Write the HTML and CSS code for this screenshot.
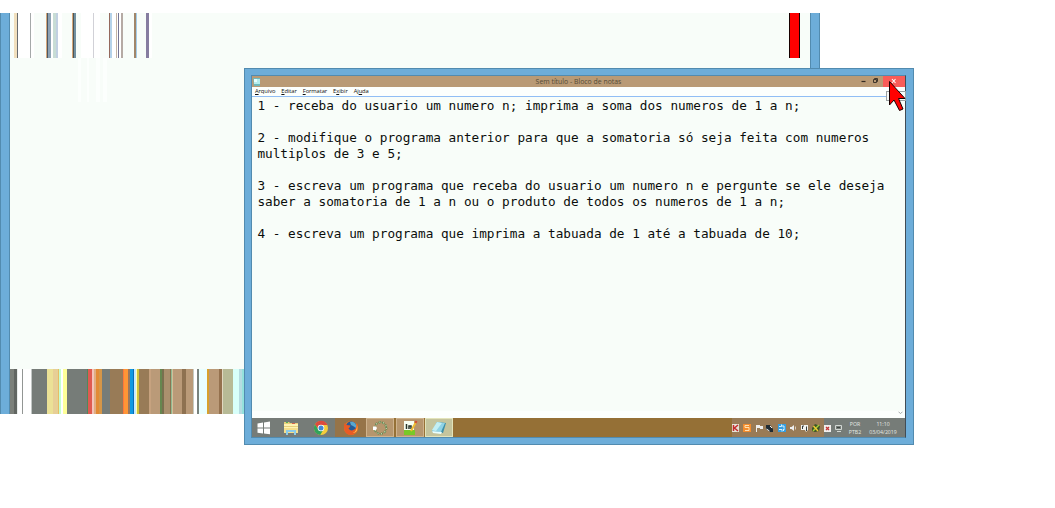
FILE: index.html
```
<!DOCTYPE html>
<html lang="pt-BR">
<head>
<meta charset="utf-8">
<title>Sem título - Bloco de notas</title>
<link rel="stylesheet" href="styles.css">
</head>
<body>
<div class="desktop">
  <section class="back-window">
    <div class="stripes-top"></div>
    <div class="ghosts"></div>
    <div class="red-bar"></div>
    <div class="stripes-bottom"></div>
  </section>

  <main class="window">
    <header class="titlebar">
      <svg class="app-icon" width="8" height="8" viewBox="0 0 8 8"><path fill="#6fb9bd" d="M0 0h7v8H1z"/><path fill="#b5eeee" d="M1 1h6v5H1z"/><path fill="#e6ffff" d="M1 1h3v3H1z"/></svg>
      <h1 class="title">Sem título - Bloco de notas</h1>
      <div class="controls">
        <svg width="15" height="11" viewBox="0 0 15 11"><path stroke="#332b22" stroke-width="1.200" d="M5.500 5.500h4"/></svg>
        <svg width="12" height="11" viewBox="0 0 12 11"><path fill="none" stroke="#40372c" d="M2.500 3.500h3v3h-3zM3.500 3.500v-1h3v3h-1"/></svg>
        <span class="close"><svg width="22" height="11" viewBox="0 0 22 11"><path stroke="#fff" stroke-width="1.100" d="M9 3l3.500 4M12.500 3L9 7"/></svg></span>
      </div>
    </header>
    <nav class="menu"><span><u>A</u>rquivo</span><span><u>E</u>ditar</span><span><u>F</u>ormatar</span><span>E<u>x</u>ibir</span><span>Aj<u>u</u>da</span></nav>
    <pre class="editor">1 - receba do usuario um numero n; imprima a soma dos numeros de 1 a n;

2 - modifique o programa anterior para que a somatoria só seja feita com numeros
multiplos de 3 e 5;

3 - escreva um programa que receba do usuario um numero n e pergunte se ele deseja
saber a somatoria de 1 a n ou o produto de todos os numeros de 1 a n;

4 - escreva um programa que imprima a tabuada de 1 até a tabuada de 10;</pre>
    <div class="scroll-corner"><svg width="5" height="4" viewBox="0 0 5 4"><path fill="none" stroke="#a3aaaa" d="M.5 .7l2 2 2-2"/></svg></div>
    <footer class="taskbar">
      <div class="apps">
        <span class="app start"><svg width="16" height="16" viewBox="0 0 16 16"><path fill="#fff" d="M1.500 3.400l5.500-.8v5H1.500zM8 2.400l6-.9v6.100H8zM1.500 8.400H7v5l-5.500-.7zM8 8.400h6v5.900l-6-.8z"/></svg></span>
        <span class="app folder"><svg width="16" height="16" viewBox="0 0 16 16"><path fill="#e9cf7b" d="M1 2h5l1 1h8v10H1z"/><path fill="#fff3b3" d="M1 4h14v9H1z"/><path fill="#52b259" d="M3 2h2v1H3z"/><path fill="#d6604e" d="M9 3h3v1H9z"/><path fill="#e7cf7b" d="M1 6h14v1H1z"/><path fill="#f6df8b" d="M1 8h14v5H1z"/><path fill="none" stroke="#8bcbe9" stroke-width="2" d="M4 15v-4h8v4"/></svg></span>
        <span class="app"><svg width="16" height="16" viewBox="0 0 16 16"><circle cx="8" cy="8" r="7" fill="#f5cd3b"/><path fill="#dc4b3e" d="M2 4.400A7 7 0 0 1 14.500 5H8a3 3 0 0 0-3 4z"/><path fill="#31a35b" d="M2 4.400A7 7 0 0 0 7.200 15l3-5A3 3 0 0 1 5 9z"/><circle cx="8" cy="8" r="3.300" fill="#fff"/><circle cx="8" cy="8" r="2.500" fill="#4289d3"/></svg></span>
        <span class="app brown"><svg width="16" height="16" viewBox="0 0 16 16"><circle cx="8" cy="8" r="7" fill="#ed7821"/><circle cx="8.300" cy="6.600" r="5.300" fill="#245b98"/><path fill="#58a8d1" d="M7 2c4-1 7 2 6 6l-3-2-2-1z"/><path fill="#e95b24" d="M1.500 3l2 2 4 .5-1 2-1 1c2 3 5 2 7 0l2-5c2 6-2 11-6.500 11.500C2 15 0 9 1.500 3z"/><path fill="#ffc34b" d="M13.500 4c1 5-1 8-4 9 5 0 6-5 4-9z"/></svg></span>
        <span class="app open"><svg width="16" height="16" viewBox="0 0 16 16"><circle cx="8.500" cy="8" r="5.800" fill="none" stroke="#658550" stroke-width="2.200" stroke-linecap="round" stroke-dasharray="0.800 2.840"/><circle cx="8.500" cy="8" r="5.800" fill="none" stroke="#c3d6ae" stroke-width="1.400" stroke-dasharray="1 2.640"/><path fill="#fff" d="M1 6.500h3l1 1.500-1 2H1z"/></svg></span>
        <span class="app open"><svg width="16" height="16" viewBox="0 0 16 16"><path fill="#f7fff1" d="M2 1h10v13H2z"/><path fill="#78c927" d="M2 10h11v5H2z"/><path fill="none" stroke="#28352b" stroke-width="1.500" d="M4.500 4v5M7 9V6h2v3"/><path stroke="#eebc31" stroke-width="2" d="M9 11l5-9"/><path stroke="#d14b32" stroke-width="2" d="M13.500 3l1-2"/></svg></span>
        <span class="app active"><svg width="16" height="16" viewBox="0 0 16 16"><path fill="#3d8fa8" d="M6 2l9 1-3 10-11-1z"/><path fill="#8fd3e6" d="M6 2l8 1-4 9-9-1z"/><path fill="#c3eff3" d="M6 2l5 1-6 8-4-1z"/><path fill="#e9ffff" d="M1 11l10 1-1 2-8-1z"/></svg></span>
      </div>
      <div class="tray">
        <svg width="112" height="10" viewBox="0 0 112 10">
          <path fill="#e5e2d8" d="M1 1h7v8H1z"/><path fill="none" stroke="#c52c2d" stroke-width="1.500" d="M2.500 2v6M7 2L3.500 5 7 8"/>
          <path fill="#f38c2e" d="M12 1h8v8h-8z"/><path fill="none" stroke="#ffe1b2" d="M18 2.500h-4v2h4v3h-4"/>
          <path fill="#eee" d="M25 2h4v1h3v3h-3V5h-3v4h-1z"/>
          <path fill="#202b33" d="M35 2h4l3 4v3h-3l-4-3z"/><path stroke="#eee" d="M35.500 6l3 2M39 3l2 2"/>
          <path fill="#359ee1" d="M47 1h8v8h-8z"/><path stroke="#d8f1ff" fill="none" d="M48 3.500h2.500v-2M52 2v2h2M48 6.500h3v2M52.500 8V6H54"/>
          <path fill="#eee" d="M59 4h1.500L63 2v6l-2.500-2H59z"/><path stroke="#d5c9ba" d="M64.500 3.500v3"/>
          <path fill="#f2f2ed" d="M70 2h7v5l-2 2-1-2h-4z"/><path fill="none" stroke="#343b3d" d="M71.500 6V3h1.500M75.500 8V3.500"/>
          <path fill="#3c5726" d="M81 5l3-4 5 2-1 5-4 1-3-1z"/><path stroke="#a8cd38" stroke-width="1.500" d="M82 8l6-6"/><path stroke="#f5cb31" stroke-width="1.500" d="M82.500 3l4.500 5"/>
          <path fill="#f1efed" d="M93 2h7v7h-7z"/><path stroke="#c33435" stroke-width="1.300" d="M95 4l3 3M98 4l-3 3"/>
          <path fill="none" stroke="#d3d8d4" d="M104.500 2.500h6v4h-6zM106 8.500h4"/><path stroke="#3f4643" d="M106 4.500h3"/>
        </svg>
        <div class="lang"><span>POR</span><span>PTB2</span></div>
        <div class="clock"><span>11:10</span><span>03/04/2019</span></div>
      </div>
    </footer>
  </main>
  <div class="tooltip"></div>
  <svg class="cursor" width="19" height="32" viewBox="0 0 19 32"><path fill="#f00" stroke="#180000" d="M1.500 1.500V25l4.500-5 5.500 10.500 3.500-1.500-4.500-10.500H17z"/></svg>
</div>
</body>
</html>
```
FILE: styles.css
```
body { margin: 0; background: #fff; }
.desktop { position: relative; width: 1055px; height: 508px; overflow: hidden; font-family: "Open Sans", "Noto Sans", sans-serif; }
.back-window { position: absolute; left: 0; top: 13px; width: 820px; height: 401px; box-sizing: border-box; background: linear-gradient(90deg, #528baf 0 1px, #6dadd9 1px 9px, #528baf 9px 10px, #f8fdf9 10px 810px, #528baf 810px 811px, #6dadd9 811px 819px, #528baf 819px); }
.stripes-top { position: absolute; left: 10px; top: 0; width: 142px; height: 45px; background: linear-gradient(90deg,
  #f8fdf9 0 4px, #f1dfbd 4px 7px, #666b70 7px 8px, #fff 8px 20px, #a5a9a9 20px 21px, #fff 21px 24px, #f8fdf9 24px 36px,
  #d5a77b 36px 37px, #4d5862 37px 38px, #8da2b4 38px 41px, #fff 41px 43px, #c8ddd5 43px 46px, #c1d0e1 46px 48px, #fff 48px 52px, #f8fdf9 52px 62px,
  #d6a779 62px 63px, #4f5554 63px 64px, #7190a1 64px 66px, #f8fdf9 66px 71px, #fff 71px 83px, #d1d1d7 83px 84px, #fff 84px 90px,
  #f8fdf9 90px 99px, #94695c 99px 100px, #b5d3ea 100px 102px, #fff 102px 106px, #c3b4a4 106px 107px, #fff 107px 108px, #757493 108px 109px, #fff 109px 111px, #b5aaa4 111px 113px,
  #f8fdf9 113px 124px, #a18669 124px 126px, #a4cce8 126px 127px, #f8fdf9 127px 136px, #867da0 136px 139px, #fff 139px 142px); }
.ghosts { position: absolute; left: 78px; top: 45px; width: 30px; height: 44px; background: linear-gradient(90deg, #fcfffd 0 3px, transparent 3px 9px, #fcfffd 9px 11px, transparent 11px 18px, #fcfffd 18px 22px, transparent 22px 25px, #fcfffd 25px 29px, transparent 29px); }
.red-bar { position: absolute; left: 789px; top: 0; width: 11px; height: 45px; box-sizing: border-box; border: solid #180000; border-width: 0 1px; background: #f00; }
.stripes-bottom { position: absolute; left: 10px; bottom: 0; width: 234px; height: 45px; background: linear-gradient(90deg,
  #7c807a 0 4px, #626662 4px 7px, #e9edeb 7px 8px, #fff 8px 12px, #929694 12px 13px, #fff 13px 21px, #c2c7c5 21px 22px, #767c78 22px 37px,
  #ebe196 37px 43px, #e7cf96 43px 48px, #e5bf65 48px 49px, #c5ffd0 49px 51px, #fff 51px 53px, #ffff98 53px 57px, #767c78 57px 77px,
  #50885b 77px 78px, #df5a51 78px 82px, #f4c3b8 82px 84px, #dfad82 84px 86px, #e28a35 86px 89px, #d59648 89px 92px, #767c78 92px 100px,
  #987b57 100px 113px, #ff783b 113px 114px, #ff9636 114px 118px, #99785f 118px 120px, #0f9ae2 120px 123px, #086bb7 123px 124px, #c7e9ff 124px 126px, #ffffb4 126px 127px, #d3c43a 127px 129px,
  #987b57 129px 139px, #c6a27f 139px 141px, #ba9a78 141px 150px, #66874f 150px 152px, #79704f 152px 154px, #ab906e 154px 160px, #8a7552 160px 161px, #90b991 161px 162px, #d1c09a 162px 163px,
  #ba9a78 163px 172px, #8e7150 172px 176px, #ba9a78 176px 183px, #c6cbc1 183px 184px, #fff 184px 187px, #78827d 187px 189px, #e9ffff 189px 197px, #d9a12d 197px 199px, #ba9a78 199px 209px, #94714e 209px 212px, #e1d7c0 212px 213px, #b7ba96 213px 223px, #d8fffa 223px 229px, #b6dce1 229px 232px, #94e1dc 232px); }

.window { position: absolute; left: 244px; top: 68px; width: 670px; height: 377px; box-sizing: border-box; display: flex; flex-direction: column; border: 1px solid #528baf; padding: 6px 7px 7px; background: #6dadd9; }
.window::before { content: ""; position: absolute; left: 6px; top: 6px; width: 655px; height: 363px; box-sizing: border-box; border: 1px solid #528baf; border-right-color: #414c55; pointer-events: none; }
.titlebar { display: flex; align-items: center; flex: none; height: 12px; margin-right: 1px; background: #b99a75; }
.app-icon { margin: 2px 0 0 1px; }
.title { flex: 1; margin: 2px 0 0 40px; text-align: center; font-size: 6.9px; line-height: 10px; font-weight: 400; color: #544b35; }
.controls { display: flex; height: 11px; }
.close { background: #f95c58; }
.controls svg { display: block; }
.menu { display: flex; flex: none; gap: 6px; height: 9px; margin-right: 1px; padding-left: 3px; background: #fcfffd; border-bottom: 1px solid #91bef5; font-size: 5.8px; letter-spacing: -.09px; line-height: 9px; color: #111; }
.menu u { text-decoration-thickness: .5px; text-underline-offset: 1px; }
.editor { flex: 1; min-height: 0; margin: 0 1px 0 0; padding: 1px 0 0 5.400px; background: #f8fdf9; color: #0b0d0b; font: 12.71px/16px "DejaVu Sans Mono", monospace; }
.scroll-corner { display: flex; flex: none; justify-content: flex-end; height: 7px; margin-right: 1px; padding: 0 2px 2px 0; box-sizing: border-box; background: #fcfffd; }
.taskbar { display: flex; flex: none; justify-content: space-between; height: 19px; margin-right: 1px; background: linear-gradient(90deg, #767c78 0 83px, #957036 83px 480px, #997b57 480px 572px, #767c78 572px); }
.apps, .tray { display: flex; align-items: center; }
.app { display: flex; align-items: center; justify-content: center; width: 29px; height: 19px; box-sizing: border-box; }
.start { width: 24px; }
.folder { width: 30px; }
.brown { width: 31px; background: #967448; }
.open { width: 28px; margin-right: 1.5px; background: #b6966e; border: 1px solid #cfb38d; }
.active { width: 28px; background: #c4c49d; border: 1px solid #e2e3ba; }
.tray { color: #e5e9e5; font-size: 5.2px; line-height: 8px; text-align: center; }
.lang, .clock { display: flex; flex-direction: column; }
.lang { width: 20px; margin-left: 2px; }
.clock { width: 36px; margin-right: 4px; }
.tooltip { position: absolute; left: 886px; top: 91px; width: 20px; height: 10px; box-sizing: border-box; border: 1px solid #9ba1a1; background: #f6f9f7; }
.cursor { position: absolute; left: 888px; top: 80px; }
```
